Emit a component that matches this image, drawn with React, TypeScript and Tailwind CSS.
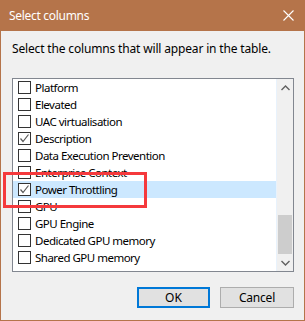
import React from "react";

const rows: { label: string; checked: boolean; selected?: boolean }[] = [
  { label: "Platform", checked: false },
  { label: "Elevated", checked: false },
  { label: "UAC virtualisation", checked: false },
  { label: "Description", checked: true },
  { label: "Data Execution Prevention", checked: false },
  { label: "Enterprise Context", checked: false },
  { label: "Power Throttling", checked: true, selected: true },
  { label: "GPU", checked: false },
  { label: "GPU Engine", checked: false },
  { label: "Dedicated GPU memory", checked: false },
  { label: "Shared GPU memory", checked: false },
];

function Check() {
  return (
    <svg width="11" height="11" viewBox="0 0 11 11" className="block">
      <polyline points="1.5,5.5 4,8.5 9.5,1.5" fill="none" stroke="#5a5a5a" strokeWidth="1.2" />
    </svg>
  );
}

export default function App() {
  return (
    <div
      className="w-[305px] h-[321px] bg-[#b5744a] flex flex-col relative"
      style={{ fontFamily: '"Noto Sans", "Open Sans", sans-serif' }}
    >
      <div className="h-[31px] flex items-center justify-between pl-[9px] pr-[11px] text-white text-[12px] tracking-[-0.3px]">
        <span>Select columns</span>
        <svg width="11" height="11" viewBox="0 0 11 11">
          <path d="M0.5 0.5 L10.5 10.5 M10.5 0.5 L0.5 10.5" stroke="#fff" strokeWidth="1.1" />
        </svg>
      </div>
      <div className="flex-1 mx-[1px] mb-[1px] bg-[#f0f0f0] flex flex-col pl-[11px] pr-[10px]">
        <div className="text-[12px] text-black mt-[10px] leading-[16px] tracking-[-0.16px]">
          Select the columns that will appear in the table.
        </div>
        <div className="mt-[21px] w-[282px] h-[194px] border border-[#828790] bg-white flex">
          <div className="flex-1 flex flex-col">
            {rows.map((r) => (
              <div
                key={r.label}
                className={`h-[17px] flex items-center pl-[5px] ${r.selected ? "bg-[#cce8ff]" : ""}`}
              >
                <div className="w-[13px] h-[13px] border border-[#333333] bg-white flex items-center justify-center">
                  {r.checked && <Check />}
                </div>
                <span className="ml-[4px] text-[11.5px] text-black leading-[17px] whitespace-nowrap tracking-[-0.5px]">
                  {r.label}
                </span>
              </div>
            ))}
          </div>
          <div className="w-[17px] bg-[#f0f0f0] flex flex-col border-l border-[#e8f2fc]">
            <div className="h-[17px] flex items-center justify-center">
              <svg width="9" height="6" viewBox="0 0 9 6">
                <polyline points="0.5,5 4.5,1 8.5,5" fill="none" stroke="#606060" strokeWidth="1.4" />
              </svg>
            </div>
            <div className="flex-1" />
            <div className="h-[39px] mx-[1px] bg-[#cdcdcd]" />
            <div className="h-[17px] flex items-center justify-center">
              <svg width="9" height="6" viewBox="0 0 9 6">
                <polyline points="0.5,1 4.5,5 8.5,1" fill="none" stroke="#606060" strokeWidth="1.4" />
              </svg>
            </div>
          </div>
        </div>
        <div className="mt-[15px] flex justify-end gap-[10px] w-[282px]">
          <button className="w-[73px] h-[21px] border-2 border-[#0078d7] bg-[#e1e1e1] text-[12px] text-black leading-none">
            OK
          </button>
          <button className="w-[74px] h-[21px] border border-[#adadad] bg-[#e1e1e1] text-[12px] text-black leading-none tracking-[-0.2px]">
            Cancel
          </button>
        </div>
      </div>
      <div className="absolute left-[3px] top-[172px] w-[144px] h-[36px] border-[3px] border-[#f5393c]" />
    </div>
  );
}
